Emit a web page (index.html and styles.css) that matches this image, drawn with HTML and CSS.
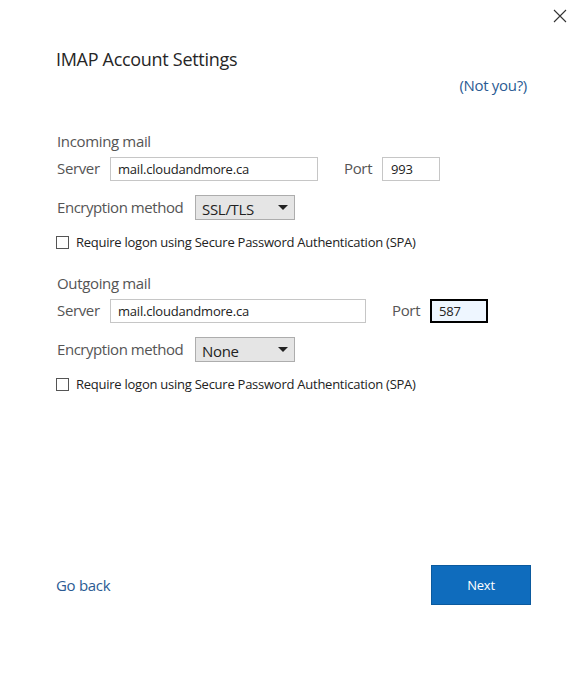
FILE: index.html
```html
<!DOCTYPE html>
<html>
<head>
<meta charset="utf-8">
<link rel="stylesheet" href="styles.css">
</head>
<body>
<div class="dialog">
  <div class="topbar">
    <button class="close" aria-label="Close">
      <svg width="14" height="14" viewBox="0 0 14 14"><path d="M1 1 L13 13 M13 1 L1 13" stroke="#333" stroke-width="1.1" fill="none"/></svg>
    </button>
  </div>
  <h1 class="title">IMAP Account Settings</h1>
  <div class="notyou-row"><a class="link">(Not you?)</a></div>

  <section class="group incoming">
    <div class="group-title">Incoming mail</div>
    <div class="row">
      <span class="label server-label">Server</span>
      <div class="field server-in">mail.cloudandmore.ca</div>
      <span class="label port-label">Port</span>
      <div class="field port-in">993</div>
    </div>
    <div class="row enc">
      <span class="label enc-label">Encryption method</span>
      <div class="select"><span>SSL/TLS</span><svg width="10" height="6" viewBox="0 0 10 6"><path d="M0 0 L10 0 L5 5 Z" fill="#222"/></svg></div>
    </div>
    <div class="check"><span class="box"></span><span>Require logon using Secure Password Authentication (SPA)</span></div>
  </section>

  <section class="group outgoing">
    <div class="group-title">Outgoing mail</div>
    <div class="row">
      <span class="label server-label">Server</span>
      <div class="field server-out">mail.cloudandmore.ca</div>
      <span class="label port-label">Port</span>
      <div class="field port-in focused">587</div>
    </div>
    <div class="row enc">
      <span class="label enc-label">Encryption method</span>
      <div class="select"><span>None</span><svg width="10" height="6" viewBox="0 0 10 6"><path d="M0 0 L10 0 L5 5 Z" fill="#222"/></svg></div>
    </div>
    <div class="check"><span class="box"></span><span>Require logon using Secure Password Authentication (SPA)</span></div>
  </section>

  <div class="footer">
    <a class="link goback">Go back</a>
    <button class="next">Next</button>
  </div>
</div>
</body>
</html>
```

FILE: styles.css
```css
html, body {
  margin: 0;
  padding: 0;
  background: #ffffff;
}
body {
  font-family: "Open Sans", "Noto Sans", sans-serif;
  color: #262626;
}
.dialog {
  width: 581px;
  height: 679px;
  box-sizing: border-box;
  padding: 0 50px 0 56px;
}
.topbar {
  height: 32px;
  display: flex;
  justify-content: flex-end;
  margin-right: -36px;
}
.close {
  border: 0;
  background: none;
  padding: 0;
  margin-top: 9px;
  width: 14px;
  height: 14px;
  display: block;
}
.close svg { display: block; }
.title {
  margin: 15px 0 0 0;
  font-size: 18px;
  line-height: 24px;
  font-weight: 400;
  color: #262626;
  letter-spacing: -0.3px;
}
.notyou-row {
  margin-top: 4px;
  display: flex;
  justify-content: flex-end;
  padding-right: 4px;
  font-size: 15px;
  line-height: 20px;
  letter-spacing: -0.3px;
}
.link {
  color: #2b5b93;
  text-decoration: none;
}
.group-title {
  font-size: 15px;
  line-height: 20px;
  color: #555555;
  padding-left: 1px;
  letter-spacing: -0.35px;
}
.incoming { margin-top: 36px; }
.outgoing { margin-top: 21px; }
.row {
  display: flex;
  align-items: center;
  margin-top: 6px;
  height: 24px;
}
.row.enc {
  margin-top: 14px;
  height: 25px;
}
.label {
  font-size: 15px;
  line-height: 20px;
  color: #555555;
  padding-left: 1px;
  box-sizing: border-box;
  margin-top: -2px;
  letter-spacing: -0.35px;
}
.server-label { width: 54px; }
.port-label { width: 39px; margin-left: 25px; }
.enc-label { width: 139px; letter-spacing: -0.45px; }
.field {
  box-sizing: border-box;
  height: 24px;
  border: 1px solid #c6c6c6;
  background: #fff;
  font-size: 13px;
  line-height: 22px;
  padding-left: 7px;
  color: #222;
  letter-spacing: -0.2px;
}
.server-in { width: 208px; }
.server-out { width: 256px; }
.port-in { width: 58px; padding-left: 8px; }
.port-in.focused {
  border: 2px solid #000;
  background: #eef6ff;
  line-height: 20px;
  padding-left: 7px;
}
.select {
  box-sizing: border-box;
  width: 100px;
  height: 25px;
  border: 1px solid #adadad;
  background: #e5e5e5;
  display: flex;
  align-items: center;
  justify-content: space-between;
  padding: 0 6px 0 6px;
  font-size: 15px;
  color: #222;
  letter-spacing: -0.3px;
}
.select span { margin-top: 3px; }
.select svg { margin-top: 1px; }
.check {
  margin-top: 12px;
  height: 20px;
  display: flex;
  align-items: center;
  font-size: 13px;
  color: #222;
  letter-spacing: -0.25px;
}
.box {
  box-sizing: border-box;
  width: 13px;
  height: 13px;
  border: 1px solid #555;
  background: #fff;
  margin-right: 7px;
  flex: none;
}
.footer {
  margin-top: 171px;
  display: flex;
  justify-content: space-between;
  align-items: center;
}
.goback {
  font-size: 15px;
  line-height: 20px;
  letter-spacing: -0.3px;
}
.next {
  width: 100px;
  height: 40px;
  box-sizing: border-box;
  background: #0f6cbd;
  border: 1px solid #0b5a9e;
  color: #fff;
  font-family: inherit;
  font-size: 13px;
  padding: 0;
  letter-spacing: -0.2px;
}
```
